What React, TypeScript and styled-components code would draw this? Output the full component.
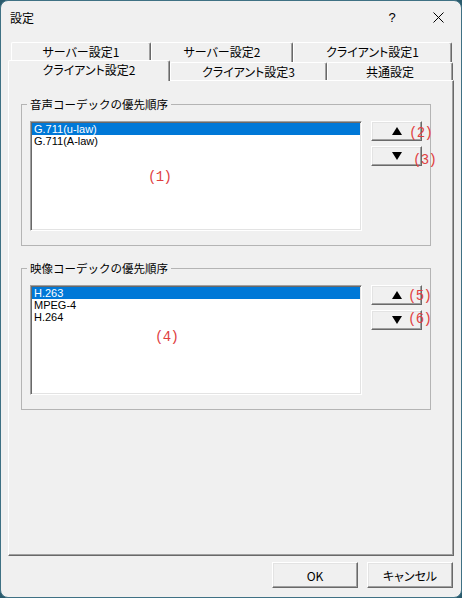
import styled, { createGlobalStyle } from "styled-components";

const GlobalStyle = createGlobalStyle`
  html, body {
    margin: 0;
    padding: 0;
    background: #2a5b6d;
  }
  body {
    font-family: "Noto Sans CJK JP", "Liberation Sans", sans-serif;
    font-size: 12px;
    color: #000;
  }
`;

const Window = styled.div`
  width: 462px;
  height: 598px;
  box-sizing: border-box;
  border: 1px solid #3f7184;
  border-radius: 8px;
  background: #f0f0f0;
  overflow: hidden;
  display: flex;
  flex-direction: column;
`;

const TitleBar = styled.div`
  height: 41px;
  display: flex;
  align-items: flex-start;
  padding: 8px 0 0 9px;
  box-sizing: border-box;
`;

const Title = styled.span`
  flex: 1;
  font-size: 12px;
  line-height: 17px;
`;

const TitleButton = styled.span`
  width: 30px;
  height: 17px;
  display: flex;
  align-items: center;
  justify-content: center;
  font-family: "Liberation Sans", sans-serif;
  font-size: 13px;
`;

const HelpButton = styled(TitleButton)`
  margin-right: 16px;
`;

const CloseButton = styled(TitleButton)`
  margin-right: 8px;
`;

const TabRow = styled.div<{ $front?: boolean }>`
  display: flex;
  align-items: flex-end;
  height: 20px;
  position: relative;
  z-index: ${(p) => (p.$front ? 2 : 1)};
  margin-left: ${(p) => (p.$front ? 7 : 10)}px;
  margin-top: ${(p) => (p.$front ? -2 : 0)}px;
`;

const Tab = styled.div<{ $w: number; $selected?: boolean }>`
  width: ${(p) => p.$w}px;
  height: ${(p) => (p.$selected ? 21 : 18)}px;
  margin-bottom: ${(p) => (p.$selected ? -1 : 0)}px;
  box-sizing: border-box;
  background: #f0f0f0;
  border-top: 1px solid #fff;
  border-left: 1px solid #fff;
  border-right: 1px solid #696969;
  border-radius: 2px 2px 0 0;
  box-shadow: inset -1px 0 #a0a0a0;
  text-align: center;
  padding-top: 1px;
  line-height: 16px;
  font-size: 12px;
  font-feature-settings: "palt" 1;
  white-space: nowrap;
`;

const BackTab = styled(Tab)`
  height: 20px;
  align-self: flex-start;
`;

const Panel = styled.div`
  margin-left: 7px;
  width: 446px;
  height: 476px;
  box-sizing: border-box;
  border-top: 1px solid #fff;
  border-left: 1px solid #fff;
  border-right: 1px solid #696969;
  border-bottom: 1px solid #696969;
  box-shadow: inset -1px -1px #a0a0a0;
  padding: 16px 0 0 12px;
  display: flex;
  flex-direction: column;
  gap: 15px;
`;

const Group = styled.fieldset`
  margin: 0;
  width: 410px;
  box-sizing: border-box;
  border: 1px solid #b4b4b4;
  padding: 10px 8px 14px 8px;
`;

const Legend = styled.legend`
  margin-left: -3px;
  padding: 0 3px;
  font-size: 11.5px;
  line-height: 14px;
`;

const GroupRow = styled.div`
  position: relative;
  display: flex;
  gap: 9px;
  align-items: flex-start;
`;

const ListBox = styled.div`
  width: 332px;
  height: 110px;
  box-sizing: border-box;
  background: #fff;
  border-top: 1px solid #a0a0a0;
  border-left: 1px solid #a0a0a0;
  border-right: 1px solid #fff;
  border-bottom: 1px solid #fff;
  box-shadow: inset 1px 1px #696969, inset -1px -1px #e3e3e3;
  padding: 1px;
`;

const ListItem = styled.div<{ $selected?: boolean }>`
  height: 12px;
  line-height: 12px;
  padding-left: 2px;
  font-family: "Liberation Sans", sans-serif;
  font-size: 11px;
  background: ${(p) => (p.$selected ? "#0078d7" : "transparent")};
  color: ${(p) => (p.$selected ? "#fff" : "#000")};
`;

const ButtonColumn = styled.div`
  display: flex;
  flex-direction: column;
  gap: 5px;
`;

const RaisedButton = styled.button`
  box-sizing: border-box;
  background: #f0f0f0;
  border-style: solid;
  border-width: 1px;
  border-color: #fff #696969 #696969 #fff;
  box-shadow: inset -1px -1px #a0a0a0, inset 1px 1px #e3e3e3;
  padding: 0;
  margin: 0;
  display: flex;
  align-items: center;
  justify-content: center;
  color: #000;
`;

const ArrowButton = styled(RaisedButton)`
  width: 51px;
  height: 20px;
`;

const Note = styled.span`
  position: absolute;
  font-family: "Liberation Mono", monospace;
  font-size: 14px;
  line-height: 16px;
  letter-spacing: -0.7px;
  color: #e0403f;
  pointer-events: none;
`;

const Footer = styled.div`
  display: flex;
  justify-content: flex-end;
  gap: 9px;
  padding: 6px 8px 0 0;
`;

const DialogButton = styled(RaisedButton)`
  width: 86px;
  height: 26px;
  font-family: "Noto Sans CJK JP", "Liberation Sans", sans-serif;
  font-size: 12px;
  font-feature-settings: "palt" 1;
`;

const Triangle = ({ up }: { up?: boolean }) => (
  <svg width="10" height="8" viewBox="0 0 10 8">
    <polygon points={up ? "5,0 10,8 0,8" : "0,0 10,0 5,8"} fill="#000" />
  </svg>
);

interface Note {
  text: string;
  left: number;
  top: number;
}

interface CodecGroupProps {
  title: string;
  items: string[];
  notes: Note[];
}

const CodecGroup = ({ title, items, notes }: CodecGroupProps) => (
  <Group>
    <Legend>{title}</Legend>
    <GroupRow>
      <ListBox>
        {items.map((item, i) => (
          <ListItem key={item} $selected={i === 0}>
            {item}
          </ListItem>
        ))}
      </ListBox>
      <ButtonColumn>
        <ArrowButton>
          <Triangle up />
        </ArrowButton>
        <ArrowButton>
          <Triangle />
        </ArrowButton>
      </ButtonColumn>
      {notes.map((n) => (
        <Note key={n.text} style={{ left: n.left, top: n.top }}>
          {n.text}
        </Note>
      ))}
    </GroupRow>
  </Group>
);

export default function App() {
  return (
    <>
      <GlobalStyle />
      <Window>
        <TitleBar>
          <Title>設定</Title>
          <HelpButton>?</HelpButton>
          <CloseButton>
            <svg width="11" height="11" viewBox="0 0 11 11">
              <path d="M0.5 0.5 L10.5 10.5 M10.5 0.5 L0.5 10.5" stroke="#000" strokeWidth="1" />
            </svg>
          </CloseButton>
        </TitleBar>

        <TabRow>
          <BackTab $w={140}>サーバー設定1</BackTab>
          <BackTab $w={142}>サーバー設定2</BackTab>
          <BackTab $w={159}>クライアント設定1</BackTab>
        </TabRow>
        <TabRow $front>
          <Tab $w={162} $selected>
            クライアント設定2
          </Tab>
          <Tab $w={157}>クライアント設定3</Tab>
          <Tab $w={126}>共通設定</Tab>
        </TabRow>

        <Panel>
          <CodecGroup
            title="音声コーデックの優先順序"
            items={["G.711(u-law)", "G.711(A-law)"]}
            notes={[
              { text: "(1)", left: 118, top: 48 },
              { text: "(2)", left: 379, top: 4 },
              { text: "(3)", left: 383, top: 31 },
            ]}
          />
          <CodecGroup
            title="映像コーデックの優先順序"
            items={["H.263", "MPEG-4", "H.264"]}
            notes={[
              { text: "(4)", left: 125, top: 44 },
              { text: "(5)", left: 378, top: 3 },
              { text: "(6)", left: 378, top: 26 },
            ]}
          />
        </Panel>

        <Footer>
          <DialogButton>OK</DialogButton>
          <DialogButton>キャンセル</DialogButton>
        </Footer>
      </Window>
    </>
  );
}
